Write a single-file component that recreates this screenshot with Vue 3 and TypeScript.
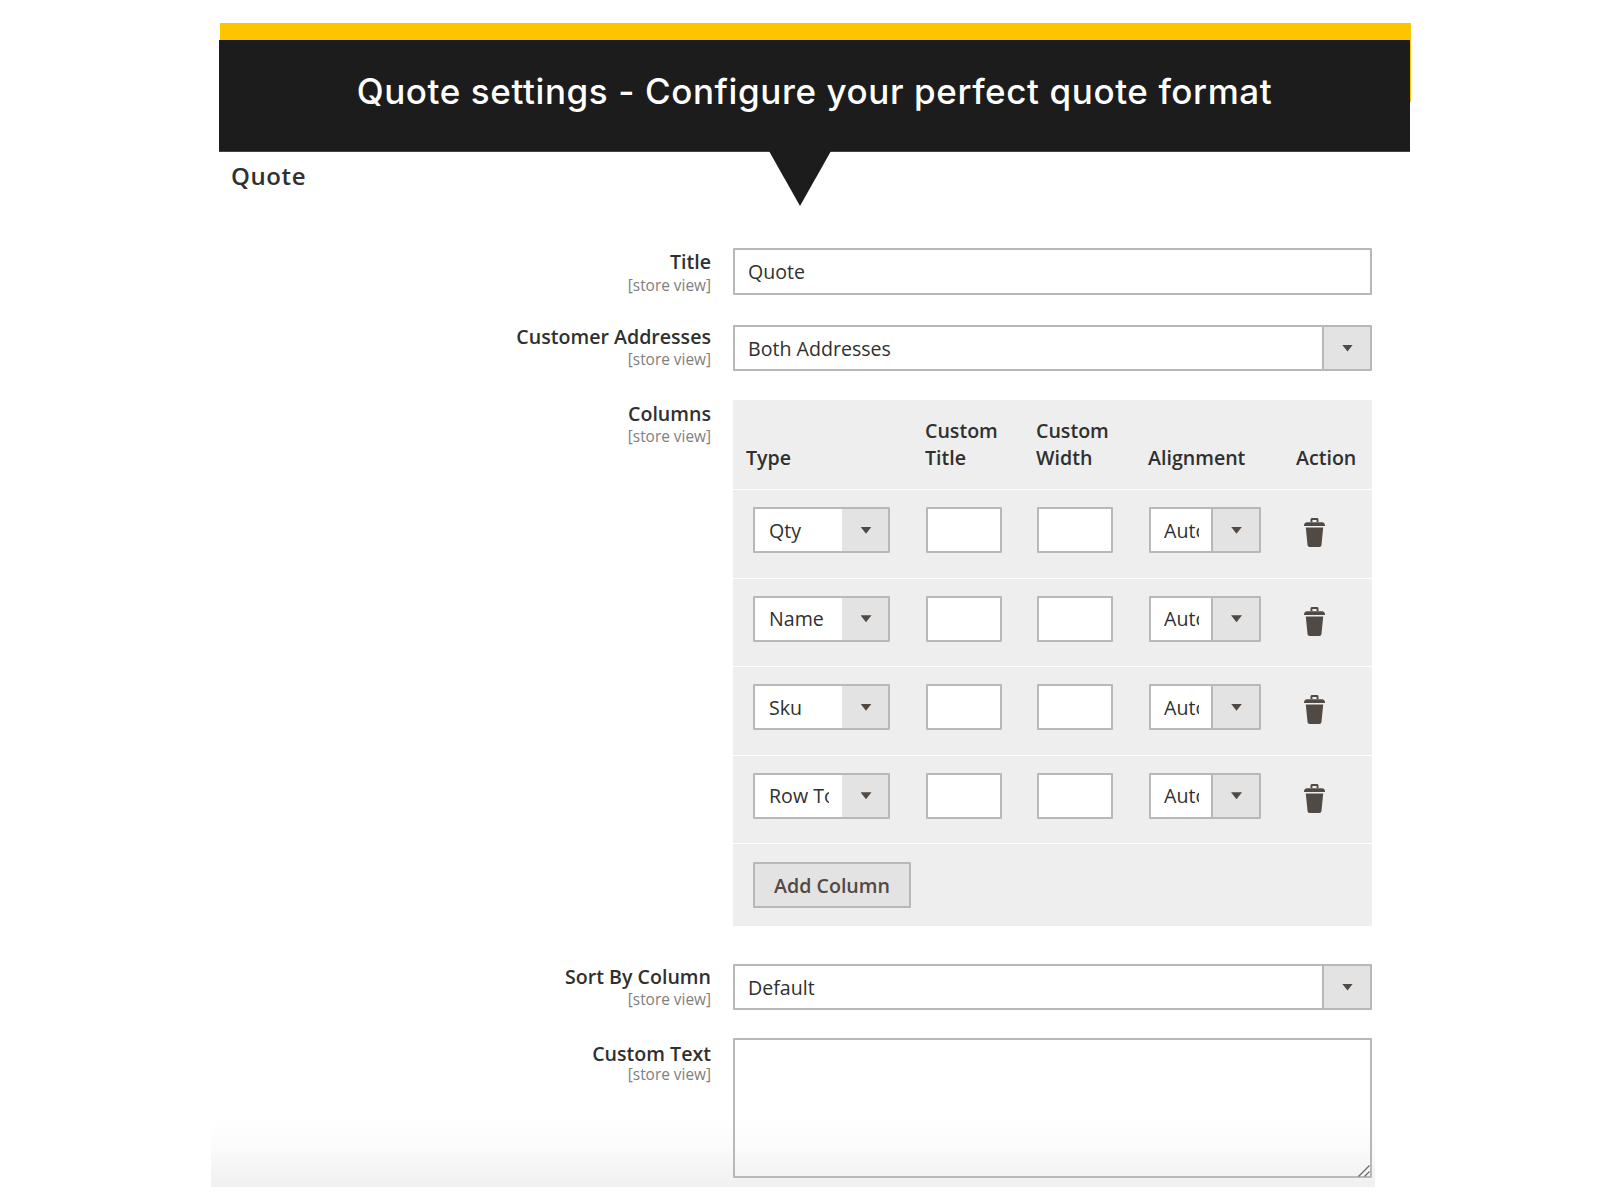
<script setup lang="ts">
interface ColumnRow {
  type: string
}

const columnRows: ColumnRow[] = [
  { type: 'Qty' },
  { type: 'Name' },
  { type: 'Sku' },
  { type: 'Row Total' },
]
</script>

<template>
  <div class="page">
    <header class="banner">
      <div class="banner-accent" />
      <div class="banner-body">
        <h1 class="banner-title">Quote settings - Configure your perfect quote format</h1>
      </div>
      <div class="banner-pointer" />
    </header>

    <section class="panel">
      <div class="panel-fade" />
      <h2 class="panel-title">Quote</h2>

      <div class="form-row title-row">
        <div class="field-label">
          <span class="label-text">Title</span>
          <span class="label-scope">[store view]</span>
        </div>
        <input class="text-input wide" type="text" value="Quote" />
      </div>

      <div class="form-row address-row">
        <div class="field-label">
          <span class="label-text">Customer Addresses</span>
          <span class="label-scope">[store view]</span>
        </div>
        <div class="select wide">
          <select class="select-native"><option>Both Addresses</option></select>
          <span class="select-btn"><i class="caret" /></span>
        </div>
      </div>

      <div class="form-row columns-row">
        <div class="field-label">
          <span class="label-text">Columns</span>
          <span class="label-scope">[store view]</span>
        </div>
        <div class="columns-table">
          <div class="table-head">
            <span>Type</span>
            <span>Custom<br />Title</span>
            <span>Custom<br />Width</span>
            <span>Alignment</span>
            <span>Action</span>
          </div>
          <div v-for="row in columnRows" :key="row.type" class="table-row">
            <div class="select type-select">
              <select class="select-native"><option>{{ row.type }}</option></select>
              <span class="select-btn flat"><i class="caret" /></span>
            </div>
            <input class="text-input cell-input" type="text" />
            <input class="text-input cell-input" type="text" />
            <div class="select align-select">
              <select class="select-native"><option>Auto</option></select>
              <span class="select-btn"><i class="caret" /></span>
            </div>
            <svg class="trash" viewBox="0 0 21 29" aria-hidden="true">
              <path d="M6.500 4V1.600C6.500.700 7.200 0 8.100 0h4.800c.900 0 1.600.700 1.600 1.600V4h-1.900V1.900H8.400V4z" />
              <path d="M0 7.500C0 5.600 1.200 4.300 3 4.300h15c1.800 0 3 1.300 3 3.200V8H0z" />
              <path d="M1.800 9.500h17.400l-1.700 17.200c-.1 1.300-1 2.300-2.300 2.300H5.800c-1.300 0-2.200-1-2.300-2.300z" />
            </svg>
          </div>
          <div class="table-foot">
            <button class="add-btn" type="button">Add Column</button>
          </div>
        </div>
      </div>

      <div class="form-row sort-row">
        <div class="field-label">
          <span class="label-text">Sort By Column</span>
          <span class="label-scope">[store view]</span>
        </div>
        <div class="select wide">
          <select class="select-native"><option>Default</option></select>
          <span class="select-btn"><i class="caret" /></span>
        </div>
      </div>

      <div class="form-row text-row">
        <div class="field-label">
          <span class="label-text">Custom Text</span>
          <span class="label-scope">[store view]</span>
        </div>
        <div class="area-wrap">
          <textarea class="text-area" />
          <svg class="area-grip" viewBox="0 0 12 12" aria-hidden="true">
            <path d="M0.500 11.500L11.500 0.500M6.500 11.500L11.500 6.500" />
          </svg>
        </div>
      </div>
    </section>
  </div>
</template>

<style scoped>
.page {
  min-height: 1200px;
  padding-top: 40px;
  box-sizing: border-box;
  background: #fff;
  font-family: "Open Sans", "Noto Sans", sans-serif;
  color: #303030;
}

.banner {
  position: relative;
  width: 1191px;
  height: 112px;
  margin-left: 219px;
}

.banner-accent {
  position: absolute;
  left: 1px;
  right: -1px;
  top: -17px;
  height: 79px;
  background: #fcc500;
}

.banner-body {
  position: relative;
  height: 100%;
  box-sizing: border-box;
  display: flex;
  align-items: center;
  justify-content: center;
  background: #1c1c1c;
  border-bottom: 1px solid #444;
}

.banner-title {
  margin: 0 0 9px;
  font-family: Inter, "Open Sans", sans-serif;
  font-size: 35px;
  font-weight: 500;
  letter-spacing: 0.6px;
  color: #fff;
  white-space: nowrap;
}

.banner-pointer {
  position: absolute;
  left: 550px;
  top: 111px;
  width: 62px;
  height: 55px;
  background: #1c1c1c;
  clip-path: polygon(0 0, 100% 0, 50% 100%);
}

.panel {
  position: relative;
  width: 1164px;
  height: 1035px;
  margin-left: 211px;
}

.panel-title {
  margin: 0;
  padding: 7px 0 0 20px;
  font-size: 24px;
  line-height: 34px;
  font-weight: 600;
  letter-spacing: 0.6px;
  color: #303030;
}

.form-row {
  position: relative;
  display: grid;
  grid-template-columns: 500px 639px;
  column-gap: 22px;
  align-items: start;
}

.title-row {
  margin-top: 55px;
}

.address-row {
  margin-top: 30px;
}

.columns-row {
  margin-top: 29px;
}

.sort-row {
  margin-top: 38px;
}

.text-row {
  margin-top: 28px;
}

.field-label {
  display: flex;
  flex-direction: column;
  align-items: flex-end;
}

.label-text {
  font-size: 19.6px;
  line-height: 28px;
  font-weight: 600;
}

.label-scope {
  margin-top: 1px;
  font-size: 15.4px;
  line-height: 16px;
  color: #808080;
}

.title-row .label-scope {
  margin-top: 2px;
}

.address-row .field-label {
  margin-top: -2px;
}

.sort-row .field-label {
  margin-top: -1px;
}

.text-row .field-label {
  margin-top: 2px;
}

.text-row .label-scope {
  margin-top: -1px;
}

.text-input,
.select,
.text-area,
.add-btn {
  box-sizing: border-box;
  border: 2px solid #b8b8b8;
  background: #fff;
  border-radius: 1px;
}

.text-input {
  height: 46px;
  padding: 0 13px;
  font: 19.6px "Open Sans", sans-serif;
  color: #303030;
  outline: none;
}

.title-row .text-input {
  height: 47px;
}

.wide {
  width: 639px;
}

.select {
  display: flex;
  height: 46px;
  overflow: hidden;
}

.select-native {
  flex: 1;
  min-width: 0;
  height: 100%;
  border: 0;
  outline: none;
  background: #fff;
  appearance: none;
  padding: 0 13px;
  font: 19.6px "Open Sans", sans-serif;
  color: #303030;
}

.select-btn {
  flex: 0 0 48px;
  display: flex;
  align-items: center;
  justify-content: center;
  padding-left: 1px;
  box-sizing: border-box;
  background: #e3e3e3;
  border-left: 2px solid #b8b8b8;
}

.select-btn.flat {
  flex-basis: 46px;
  padding-left: 2px;
  border-left: 0;
}

.caret {
  width: 11px;
  height: 7px;
  background: #514943;
  clip-path: polygon(0 0, 100% 0, 50% 100%);
}

.columns-table {
  background: #eee;
}

.table-head,
.table-row {
  display: grid;
  grid-template-columns: 173px 111px 112px 148px 1fr;
  align-items: center;
  padding-left: 20px;
}

.table-head {
  grid-template-columns: 179px 111px 112px 148px 1fr;
  padding-left: 13px;
  height: 90px;
  align-items: end;
  padding-bottom: 18px;
  box-sizing: border-box;
  font-size: 19.6px;
  line-height: 27px;
  font-weight: 600;
  border-bottom: 1px solid #fff;
}

.table-row {
  height: 88.5px;
  box-sizing: border-box;
  border-bottom: 1px solid #fff;
  padding-bottom: 7px;
}

.type-select {
  width: 137px;
}

.type-select .select-native {
  padding-left: 14px;
}

.align-select {
  width: 112px;
}

.align-select .select-native {
  padding-right: 12px;
}

.cell-input {
  width: 75.5px;
}

.trash {
  width: 21px;
  height: 29px;
  margin-left: 7px;
  margin-top: 5px;
  fill: #514943;
}

.table-foot {
  height: 82px;
  padding: 18px 0 0 20px;
  box-sizing: border-box;
}

.add-btn {
  width: 158px;
  height: 46px;
  background: #e3e3e3;
  font: 600 19.6px "Open Sans", sans-serif;
  color: #514943;
  padding: 0;
}

.area-wrap {
  position: relative;
  width: 639px;
}

.text-area {
  display: block;
  width: 100%;
  height: 140px;
  background: transparent;
  outline: none;
  resize: none;
}

.panel-fade {
  position: absolute;
  left: 0;
  right: 0;
  bottom: 0;
  height: 67px;
  background: linear-gradient(to bottom, rgba(240, 240, 240, 0), rgba(240, 240, 240, 0.27) 40%, rgb(240, 240, 240));
  pointer-events: none;
}

.area-grip {
  position: absolute;
  right: 2px;
  bottom: 1px;
  width: 12px;
  height: 12px;
  fill: none;
  stroke: #666;
  stroke-width: 1.2;
}
</style>
